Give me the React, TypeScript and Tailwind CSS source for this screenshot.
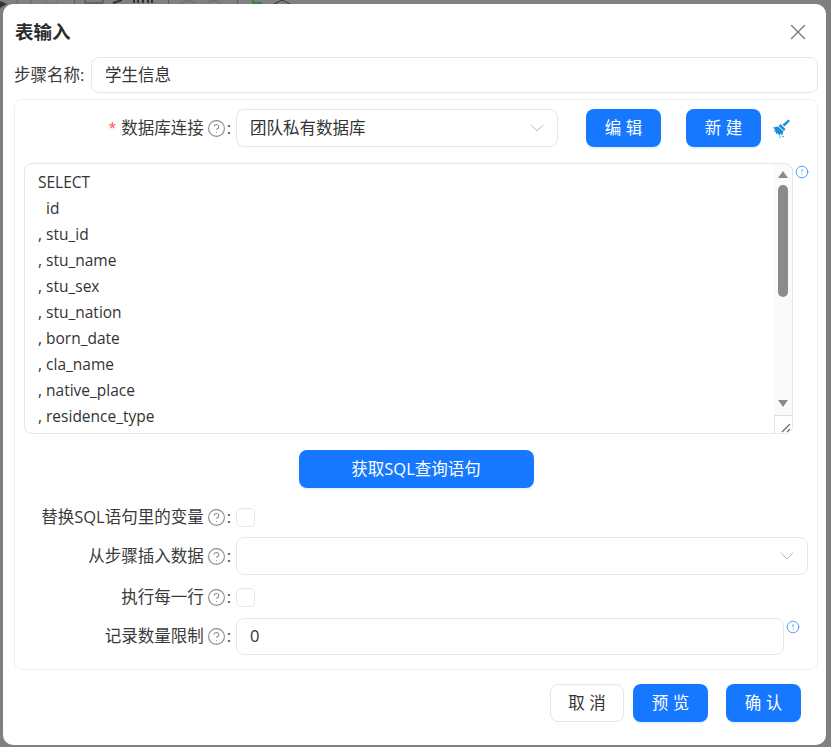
import type { ReactNode } from "react";
import { ChevronDown, CircleAlert, CircleHelp, X } from "lucide-react";

const FONT = "[font-family:'Open_Sans','Noto_Sans_CJK_SC',sans-serif]";
const BORDER = "border border-[#e6e6e6]";
const PRIMARY =
  "flex h-[38px] items-center justify-center rounded-lg bg-[#1677ff] text-[16.5px] text-white shadow-[0_2px_0_rgba(5,145,255,0.1)]";

const sqlLines = [
  "SELECT",
  "\u00a0\u00a0id",
  ", stu_id",
  ", stu_name",
  ", stu_sex",
  ", stu_nation",
  ", born_date",
  ", cla_name",
  ", native_place",
  ", residence_type",
];

function FieldLabel({
  children,
  required,
}: {
  children: ReactNode;
  required?: boolean;
}) {
  return (
    <div className="flex w-[221px] shrink-0 items-center justify-end pr-[5px] text-[16.5px] text-[#3a3a3a]">
      {required && <span className="mr-[5px] text-sm text-[#ff4d4f]">*</span>}
      <span>{children}</span>
      <CircleHelp size={19} strokeWidth={1.4} className="ml-[3px] text-[#8c8c8c]" />
      <span className="ml-[1px]">:</span>
    </div>
  );
}

function SelectBox({ value, className }: { value?: string; className: string }) {
  return (
    <div
      className={`flex h-[38px] items-center justify-between rounded-lg pl-[13px] pr-[8px] text-[16.5px] text-[#333] ${BORDER} ${className}`}
    >
      <span>{value}</span>
      <ChevronDown size={24} strokeWidth={1} className="text-[#bcbcbc]" />
    </div>
  );
}

function Checkbox() {
  return <div className={`h-[19px] w-[19px] rounded-[5px] ${BORDER}`} />;
}

function InfoMark({ className }: { className: string }) {
  return <CircleAlert size={14} strokeWidth={1.5} className={`text-[#4096ff] ${className}`} />;
}

function BroomIcon() {
  return (
    <svg width="20" height="20" viewBox="0 0 20 20" className="ml-[10px]" fill="#1a8fd8">
      <path d="M11.5 6.5 L17.5 1.5 L19 3 L13.5 8.5 Z" />
      <path d="M9.5 6 L14.5 11 L13 13 L7.5 8 Z" />
      <path d="M2 9.5 L7 8.5 L12.5 13.5 L11 17.5 L9.5 15.5 L8.5 18 L6.5 15 L5 16.5 L5 13.5 L3 14 L4 11.5 Z" />
      <circle cx="12" cy="18.5" r="0.8" />
      <circle cx="9" cy="19" r="0.7" />
    </svg>
  );
}

function Scrollbar() {
  return (
    <div className="flex w-[18px] shrink-0 flex-col items-center bg-[#fafafa]">
      <div className="mt-[7px] h-0 w-0 border-x-[5px] border-b-[7px] border-x-transparent border-b-[#8a8a8a]" />
      <div className="mt-[7px] h-[112px] w-[10px] shrink-0 rounded-[5px] bg-[#8b8b8b]" />
      <div className="mt-[103px] h-0 w-0 border-x-[5px] border-t-[7px] border-x-transparent border-t-[#8a8a8a]" />
      <div className="mt-[8px] flex h-[18px] w-[18px] shrink-0 items-end justify-end border-l border-t border-[#e0e0e0] bg-white">
        <svg width="12" height="12" viewBox="0 0 12 12" stroke="#666" strokeWidth="1.1">
          <path d="M2 11 L10 3 M7 11 L10 8" />
        </svg>
      </div>
    </div>
  );
}

function BackdropIcons() {
  return (
    <div className="absolute left-0 top-0 h-[14px] w-full">
      <svg width="320" height="14" viewBox="0 0 320 14" fill="none">
        <path d="M0 1 L7 4 L0 8 Z" fill="#333" />
        <path d="M17 0V4M31 0V4" stroke="#666" />
        <path d="M46 0V4H57V0" stroke="#777" />
        <path d="M74.5 0V8M168.5 0V8M237.5 0V8" stroke="#44607c" />
        <path d="M85 0V3H103V0" stroke="#444" />
        <path d="M113 3L122 0" stroke="#333" strokeWidth="2" />
        <path d="M134 0V3M138 0V3M143 0V3M148 0V3M152 0V3" stroke="#222" strokeWidth="1.6" />
        <path d="M180 4Q188 -2 195 3M207 3Q214 -2 221 4" stroke="#6e6e6e" strokeWidth="1.5" />
        <path d="M253 0V3H262" stroke="#2f7a2f" strokeWidth="1.6" />
        <path d="M274 4L282 0L290 4" stroke="#333" />
      </svg>
    </div>
  );
}

export default function App() {
  return (
    <div className={`relative h-[747px] w-[831px] overflow-hidden bg-[#808080] pl-[3px] pt-[4px] ${FONT}`}>
      <BackdropIcons />
      <div className="relative h-[741px] w-[823px] rounded-[10px] bg-white pl-[10px] pr-[8px]">
        <div className="flex h-[53px] items-center justify-between pl-[2px] pr-[7px] pt-[3px]">
          <h1 className="text-[18.5px] font-semibold text-[#2b2b2b]">表输入</h1>
          <X size={26} strokeWidth={1.2} className="text-[#777]" />
        </div>

        <div className="flex items-center">
          <span className="w-[78px] shrink-0 pl-[1px] text-[16.5px] text-[#3a3a3a]">步骤名称:</span>
          <div className={`flex h-[36px] flex-1 items-center rounded-lg px-[13px] text-[16.5px] text-[#333] ${BORDER}`}>
            学生信息
          </div>
        </div>

        <section className="ml-[1px] mt-[6px] h-[571px] rounded-lg border border-[#f0f0f0] pt-[9px]">
          <div className="flex items-center">
            <FieldLabel required>数据库连接</FieldLabel>
            <SelectBox value="团队私有数据库" className="w-[322px]" />
            <button className={`${PRIMARY} ml-[28px] w-[75px]`}>编 辑</button>
            <button className={`${PRIMARY} ml-[25px] w-[75px]`}>新 建</button>
            <BroomIcon />
          </div>

          <div className="ml-[9px] mt-[16px] flex items-start">
            <div className={`flex h-[271px] w-[769px] overflow-hidden rounded-lg ${BORDER}`}>
              <div className="flex-1 pl-[13px] pt-[5px] text-[15.5px] leading-[26px] text-[#333]">
                {sqlLines.map((line) => (
                  <div key={line}>{line}</div>
                ))}
              </div>
              <Scrollbar />
            </div>
            <InfoMark className="ml-[2px] mt-[2px]" />
          </div>

          <button className={`${PRIMARY} mx-auto mt-[16px] w-[235px]`}>获取SQL查询语句</button>

          <div className="mt-[19px] flex h-[20px] items-center">
            <FieldLabel>替换SQL语句里的变量</FieldLabel>
            <Checkbox />
          </div>
          <div className="mt-[10px] flex items-center">
            <FieldLabel>从步骤插入数据</FieldLabel>
            <SelectBox className="w-[572px]" />
          </div>
          <div className="mt-[12px] flex h-[20px] items-center">
            <FieldLabel>执行每一行</FieldLabel>
            <Checkbox />
          </div>
          <div className="mt-[11px] flex items-start">
            <div className="flex h-[37px] items-center">
              <FieldLabel>记录数量限制</FieldLabel>
            </div>
            <div className={`flex h-[37px] w-[548px] items-center rounded-lg px-[13px] text-[16.5px] text-[#333] ${BORDER}`}>
              0
            </div>
            <InfoMark className="ml-[2px] mt-[2px]" />
          </div>
        </section>

        <footer className="mt-[14px] flex justify-end pr-[17px]">
          <button className={`flex h-[38px] w-[74px] items-center justify-center rounded-lg text-[16.5px] text-[#333] ${BORDER}`}>
            取 消
          </button>
          <button className={`${PRIMARY} ml-[9px] w-[75px]`}>预 览</button>
          <button className={`${PRIMARY} ml-[18px] w-[75px]`}>确 认</button>
        </footer>
      </div>
    </div>
  );
}
